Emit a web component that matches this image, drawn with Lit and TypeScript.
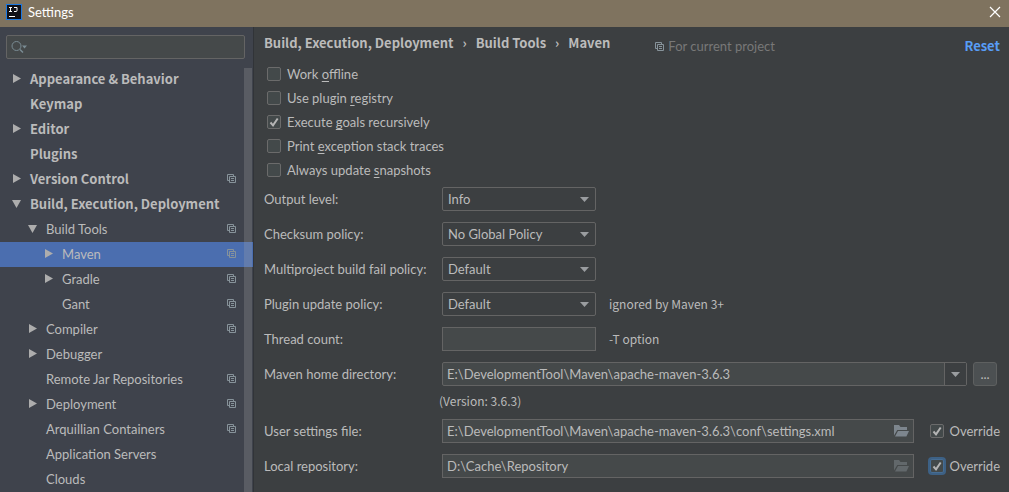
import { LitElement, html, svg, css, nothing } from "lit";
import { customElement, property } from "lit/decorators.js";
import { classMap } from "lit/directives/class-map.js";

interface TreeNode {
  label: string;
  level: number;
  state?: "open" | "closed";
  project?: boolean;
  selected?: boolean;
}

const TREE: TreeNode[] = [
  { label: "Appearance & Behavior", level: 0, state: "closed" },
  { label: "Keymap", level: 0 },
  { label: "Editor", level: 0, state: "closed" },
  { label: "Plugins", level: 0 },
  { label: "Version Control", level: 0, state: "closed", project: true },
  { label: "Build, Execution, Deployment", level: 0, state: "open" },
  { label: "Build Tools", level: 1, state: "open", project: true },
  { label: "Maven", level: 2, state: "closed", project: true, selected: true },
  { label: "Gradle", level: 2, state: "closed", project: true },
  { label: "Gant", level: 2, project: true },
  { label: "Compiler", level: 1, state: "closed", project: true },
  { label: "Debugger", level: 1, state: "closed" },
  { label: "Remote Jar Repositories", level: 1, project: true },
  { label: "Deployment", level: 1, state: "closed", project: true },
  { label: "Arquillian Containers", level: 1, project: true },
  { label: "Application Servers", level: 1 },
  { label: "Clouds", level: 1 },
];

const shared = css`
  *,
  *::before,
  *::after {
    box-sizing: border-box;
  }
  svg {
    display: block;
    flex: none;
  }
  button,
  input,
  select {
    font: inherit;
    color: inherit;
    margin: 0;
  }
`;

const projectIcon = html`<svg width="9" height="9" viewBox="0 0 9 9" aria-hidden="true">
  <path d="M2 6.5H.5v-6h6V2M2.5 2.5h6v6h-6zM4 4.5h3M4 6.5h3" fill="none" stroke="#87939a" />
</svg>`;

const downArrow = html`<svg class="arrow" width="9" height="5" viewBox="0 0 9 5" aria-hidden="true">
  <path d="M0 0h9L4.500 5z" fill="#9a9da0" />
</svg>`;

const folder = (dim: boolean) => html`<svg width="15" height="12" viewBox="0 0 15 12" aria-hidden="true">
  <path
    d="M0 10.500V0h5l1.500 2H13v3H3.300zM4 6h11l-2.600 5.500H1z"
    fill=${dim ? "#62686b" : "#7d868e"}
  />
</svg>`;

@customElement("settings-tree")
class SettingsTree extends LitElement {
  static styles = [
    shared,
    css`
      :host {
        display: flex;
        flex-direction: column;
        min-height: 0;
        padding-top: 8px;
        background: #3f434c;
        border-right: 1px solid #313438;
      }
      .search {
        display: flex;
        align-items: center;
        gap: 4px;
        height: 24px;
        margin: 0 8px 8px 6px;
        padding: 0 4px;
        background: #45494a;
        border: 1px solid #646464;
        border-radius: 2px;
      }
      .search input {
        flex: 1;
        min-width: 0;
        border: 0;
        padding: 0;
        background: none;
        outline: none;
      }
      .scroller {
        display: grid;
        flex: 1;
        min-height: 0;
        overflow: hidden;
      }
      .rows,
      .bar {
        grid-area: 1 / 1;
      }
      .rows {
        list-style: none;
        margin: 0;
        padding: 0;
        min-height: 0;
      }
      .bar {
        justify-self: end;
        width: 8px;
        margin: 1px 1px 0 0;
        background: rgba(166, 166, 166, 0.25);
      }
      .row {
        display: flex;
        align-items: center;
        height: 25px;
        padding: 0 17px 2px 12px;
        color: #bbbbbb;
        text-decoration: none;
      }
      .l0 {
        font-family: "Noto Sans CJK SC", "Noto Sans", sans-serif;
        font-weight: 700;
      }
      .l1 {
        padding-left: 28px;
      }
      .l2 {
        padding-left: 44px;
      }
      .selected {
        background: #4b6eaf;
      }
      .twist {
        width: 18px;
        flex: none;
      }
      .label {
        flex: 1;
        white-space: nowrap;
        line-height: 20px;
      }
    `,
  ];

  private twist(state?: string) {
    if (!state) return nothing;
    const d = state === "open" ? "M0 1h9L4.500 9z" : "M1 0v9l8-4.500z";
    return html`<svg width="9" height="9" viewBox="0 0 9 9" aria-hidden="true">
      ${svg`<path d=${d} fill="#adadad" />`}
    </svg>`;
  }

  render() {
    return html`
      <div class="search">
        <svg width="18" height="14" viewBox="0 0 18 14" aria-hidden="true">
          <circle cx="5.500" cy="6" r="4.500" fill="none" stroke="#7a8c94" />
          <path d="M9 9.500l3 3" stroke="#7a8c94" stroke-width="1.500" />
          <path d="M11 5.500h5l-2.500 3z" fill="#7a8c94" />
        </svg>
        <input type="text" aria-label="Search settings" />
      </div>
      <div class="scroller">
        <ul class="rows">
          ${TREE.map(
            (n) => html`<li>
              <a
                href="#"
                class=${classMap({ row: true, ["l" + n.level]: true, selected: !!n.selected })}
                aria-current=${n.selected ? "page" : nothing}
              >
                <span class="twist">${this.twist(n.state)}</span>
                <span class="label">${n.label}</span>
                ${n.project ? projectIcon : nothing}
              </a>
            </li>`
          )}
        </ul>
        <div class="bar"></div>
      </div>
    `;
  }
}

@customElement("check-box")
class CheckBox extends LitElement {
  @property() before = "";
  @property() key = "";
  @property() after = "";
  @property({ type: Boolean }) checked = false;
  @property({ type: Boolean }) ring = false;

  static styles = [
    shared,
    css`
      :host {
        display: block;
      }
      label {
        display: flex;
        align-items: center;
        gap: 6px;
        height: 24px;
        line-height: 20px;
        white-space: nowrap;
      }
      input {
        appearance: none;
        flex: none;
        width: 14px;
        height: 14px;
        background: #43494a;
        border: 1px solid #6b6b6b;
        border-radius: 2px;
      }
      input:checked {
        background: #43494a
          url("data:image/svg+xml,%3Csvg xmlns='http://www.w3.org/2000/svg' width='12' height='12'%3E%3Cpath d='M2.500 6.500L5 9.300L9.700 2.500' fill='none' stroke='%23b4b4b4' stroke-width='2'/%3E%3C/svg%3E")
          center no-repeat;
      }
      .ring {
        border-color: #466d94;
        box-shadow: 0 0 0 2px #3d6185;
      }
      u {
        text-underline-offset: 2px;
      }
    `,
  ];

  render() {
    return html`<label>
      <input type="checkbox" class=${classMap({ ring: this.ring })} .checked=${this.checked} />
      <span>${this.before}${this.key ? html`<u>${this.key}</u>` : nothing}${this.after}</span>
    </label>`;
  }
}

@customElement("app-root")
class AppRoot extends LitElement {
  static styles = [
    shared,
    css`
      :host {
        display: flex;
        flex-direction: column;
        height: 100vh;
        overflow: hidden;
        font: 13px / 20px Lato, "Noto Sans", sans-serif;
        color: #bbbbbb;
        background: #3c3f41;
      }
      .titlebar {
        display: flex;
        align-items: center;
        gap: 6px;
        flex: none;
        height: 27px;
        padding: 0 8px 3px 6px;
        background: #7f735f;
        color: #ffffff;
      }
      .title {
        flex: 1;
        margin: 0;
        font-size: 13px;
        font-weight: 400;
      }
      .close {
        padding: 0;
        border: 0;
        background: none;
      }
      .body {
        display: grid;
        grid-template-columns: 254px 1fr;
        flex: 1;
        min-height: 0;
      }
      main {
        min-width: 0;
        padding: 6px 9px 0 10px;
      }
      .head {
        display: flex;
        align-items: center;
        height: 20px;
        margin-bottom: 9px;
      }
      .crumbs {
        display: flex;
        align-items: center;
        gap: 9px;
        margin: 0 45px 0 0;
        padding: 0;
        list-style: none;
        font-family: "Noto Sans CJK SC", "Noto Sans", sans-serif;
        font-weight: 700;
      }
      .scope {
        display: flex;
        align-items: center;
        gap: 4px;
        flex: 1;
        padding-top: 6px;
        color: #787878;
      }
      .reset {
        padding-top: 6px;
        color: #589df6;
        font-family: "Noto Sans CJK SC", "Noto Sans", sans-serif;
        font-weight: 700;
        text-decoration: none;
      }
      .checks {
        padding-left: 3px;
        margin-bottom: 5px;
      }
      .form {
        display: grid;
        grid-template-columns: 178px 1fr;
        row-gap: 11px;
        align-items: center;
      }
      .line {
        display: flex;
        align-items: center;
        height: 24px;
      }
      .select {
        display: grid;
        align-items: center;
        width: 154px;
        height: 24px;
      }
      .select > * {
        grid-area: 1 / 1;
      }
      .select .arrow {
        justify-self: end;
        margin-right: 7px;
        pointer-events: none;
      }
      select {
        appearance: none;
        width: 100%;
        height: 24px;
        padding: 0 20px 0 5px;
        background: #3c3f41;
        border: 1px solid #646464;
        border-radius: 2px;
      }
      .text {
        width: 154px;
        height: 24px;
        padding: 0 4px;
        background: #45494a;
        border: 1px solid #646464;
      }
      .hint,
      .version {
        font-family: "Noto Sans CJK SC", "Noto Sans", sans-serif;
        font-size: 12px;
      }
      .hint {
        margin-left: 13px;
      }
      .box {
        display: flex;
        align-items: center;
        flex: 1;
        height: 24px;
        padding-right: 4px;
        background: #45494a;
        border: 1px solid #646464;
      }
      .box input {
        flex: 1;
        min-width: 0;
        height: 22px;
        padding: 0 4px;
        border: 0;
        background: none;
        outline: none;
      }
      .combo {
        padding-right: 0;
        border-radius: 2px;
      }
      .drop {
        display: grid;
        place-items: center;
        width: 22px;
        height: 22px;
        padding: 0;
        border: 0;
        border-left: 1px solid #646464;
        background: #3c3f41;
      }
      .icon {
        padding: 0;
        border: 0;
        background: none;
      }
      .more {
        width: 24px;
        height: 24px;
        margin: 0 3px 0 6px;
        padding: 0;
        background: #4c5052;
        border: 1px solid #5e6060;
        border-radius: 3px;
      }
      .version {
        grid-column: 2;
        margin: -4px 0 -1px -3px;
        line-height: 16px;
      }
      .override {
        margin-left: 16px;
      }
    `,
  ];

  private choice(id: string, label: string, value: string, hint = "") {
    return html`<label for=${id}>${label}</label>
      <div class="line">
        <span class="select">
          <select id=${id}>
            <option>${value}</option>
          </select>
          ${downArrow}
        </span>
        ${hint ? html`<span class="hint">${hint}</span>` : nothing}
      </div>`;
  }

  private path(id: string, label: string, value: string, last: boolean) {
    return html`<label for=${id}>${label}</label>
      <div class="line">
        <span class="box">
          <input id=${id} type="text" .value=${value} />
          <button class="icon" aria-label="Browse">${folder(last)}</button>
        </span>
        <check-box class="override" before="Override" checked ?ring=${last}></check-box>
      </div>`;
  }

  render() {
    return html`
      <header class="titlebar">
        <svg width="16" height="16" viewBox="0 0 16 16" aria-hidden="true">
          <rect x=".5" y=".5" width="15" height="15" fill="#111118" stroke="#1b78e2" />
          <path
            d="M3 3.500h3M4.500 3.500v4M3 7.500h3M8 3.500h3v3q0 1-1 1H8M3 12.500h6"
            fill="none"
            stroke="#fff"
          />
        </svg>
        <h1 class="title">Settings</h1>
        <button class="close" aria-label="Close">
          <svg width="12" height="12" viewBox="0 0 12 12" aria-hidden="true">
            <path d="M1 1l10 10M11 1L1 11" stroke="#fff" stroke-width="1.200" />
          </svg>
        </button>
      </header>
      <div class="body">
        <settings-tree></settings-tree>
        <main>
          <div class="head">
            <ol class="crumbs">
              <li>Build, Execution, Deployment</li>
              <li aria-hidden="true">›</li>
              <li>Build Tools</li>
              <li aria-hidden="true">›</li>
              <li>Maven</li>
            </ol>
            <span class="scope">${projectIcon} For current project</span>
            <a class="reset" href="#">Reset</a>
          </div>
          <div class="checks">
            <check-box before="Work " key="o" after="ffline"></check-box>
            <check-box before="Use plugin " key="r" after="egistry"></check-box>
            <check-box before="Execute " key="g" after="oals recursively" checked></check-box>
            <check-box before="Print " key="e" after="xception stack traces"></check-box>
            <check-box before="Always update " key="s" after="napshots"></check-box>
          </div>
          <div class="form">
            ${this.choice("level", "Output level:", "Info")}
            ${this.choice("checksum", "Checksum policy:", "No Global Policy")}
            ${this.choice("fail", "Multiproject build fail policy:", "Default")}
            ${this.choice("update", "Plugin update policy:", "Default", "ignored by Maven 3+")}
            <label for="threads">Thread count:</label>
            <div class="line">
              <input class="text" id="threads" type="text" />
              <span class="hint">-T option</span>
            </div>
            <label for="home">Maven home directory:</label>
            <div class="line">
              <span class="box combo">
                <input id="home" type="text" .value=${"E:\\DevelopmentTool\\Maven\\apache-maven-3.6.3"} />
                <button class="drop" aria-label="Show directories">${downArrow}</button>
              </span>
              <button class="more" aria-label="Browse for directory">...</button>
            </div>
            <div class="version">(Version: 3.6.3)</div>
            ${this.path(
              "user",
              "User settings file:",
              "E:\\DevelopmentTool\\Maven\\apache-maven-3.6.3\\conf\\settings.xml",
              false
            )}
            ${this.path("repo", "Local repository:", "D:\\Cache\\Repository", true)}
          </div>
        </main>
      </div>
    `;
  }
}
